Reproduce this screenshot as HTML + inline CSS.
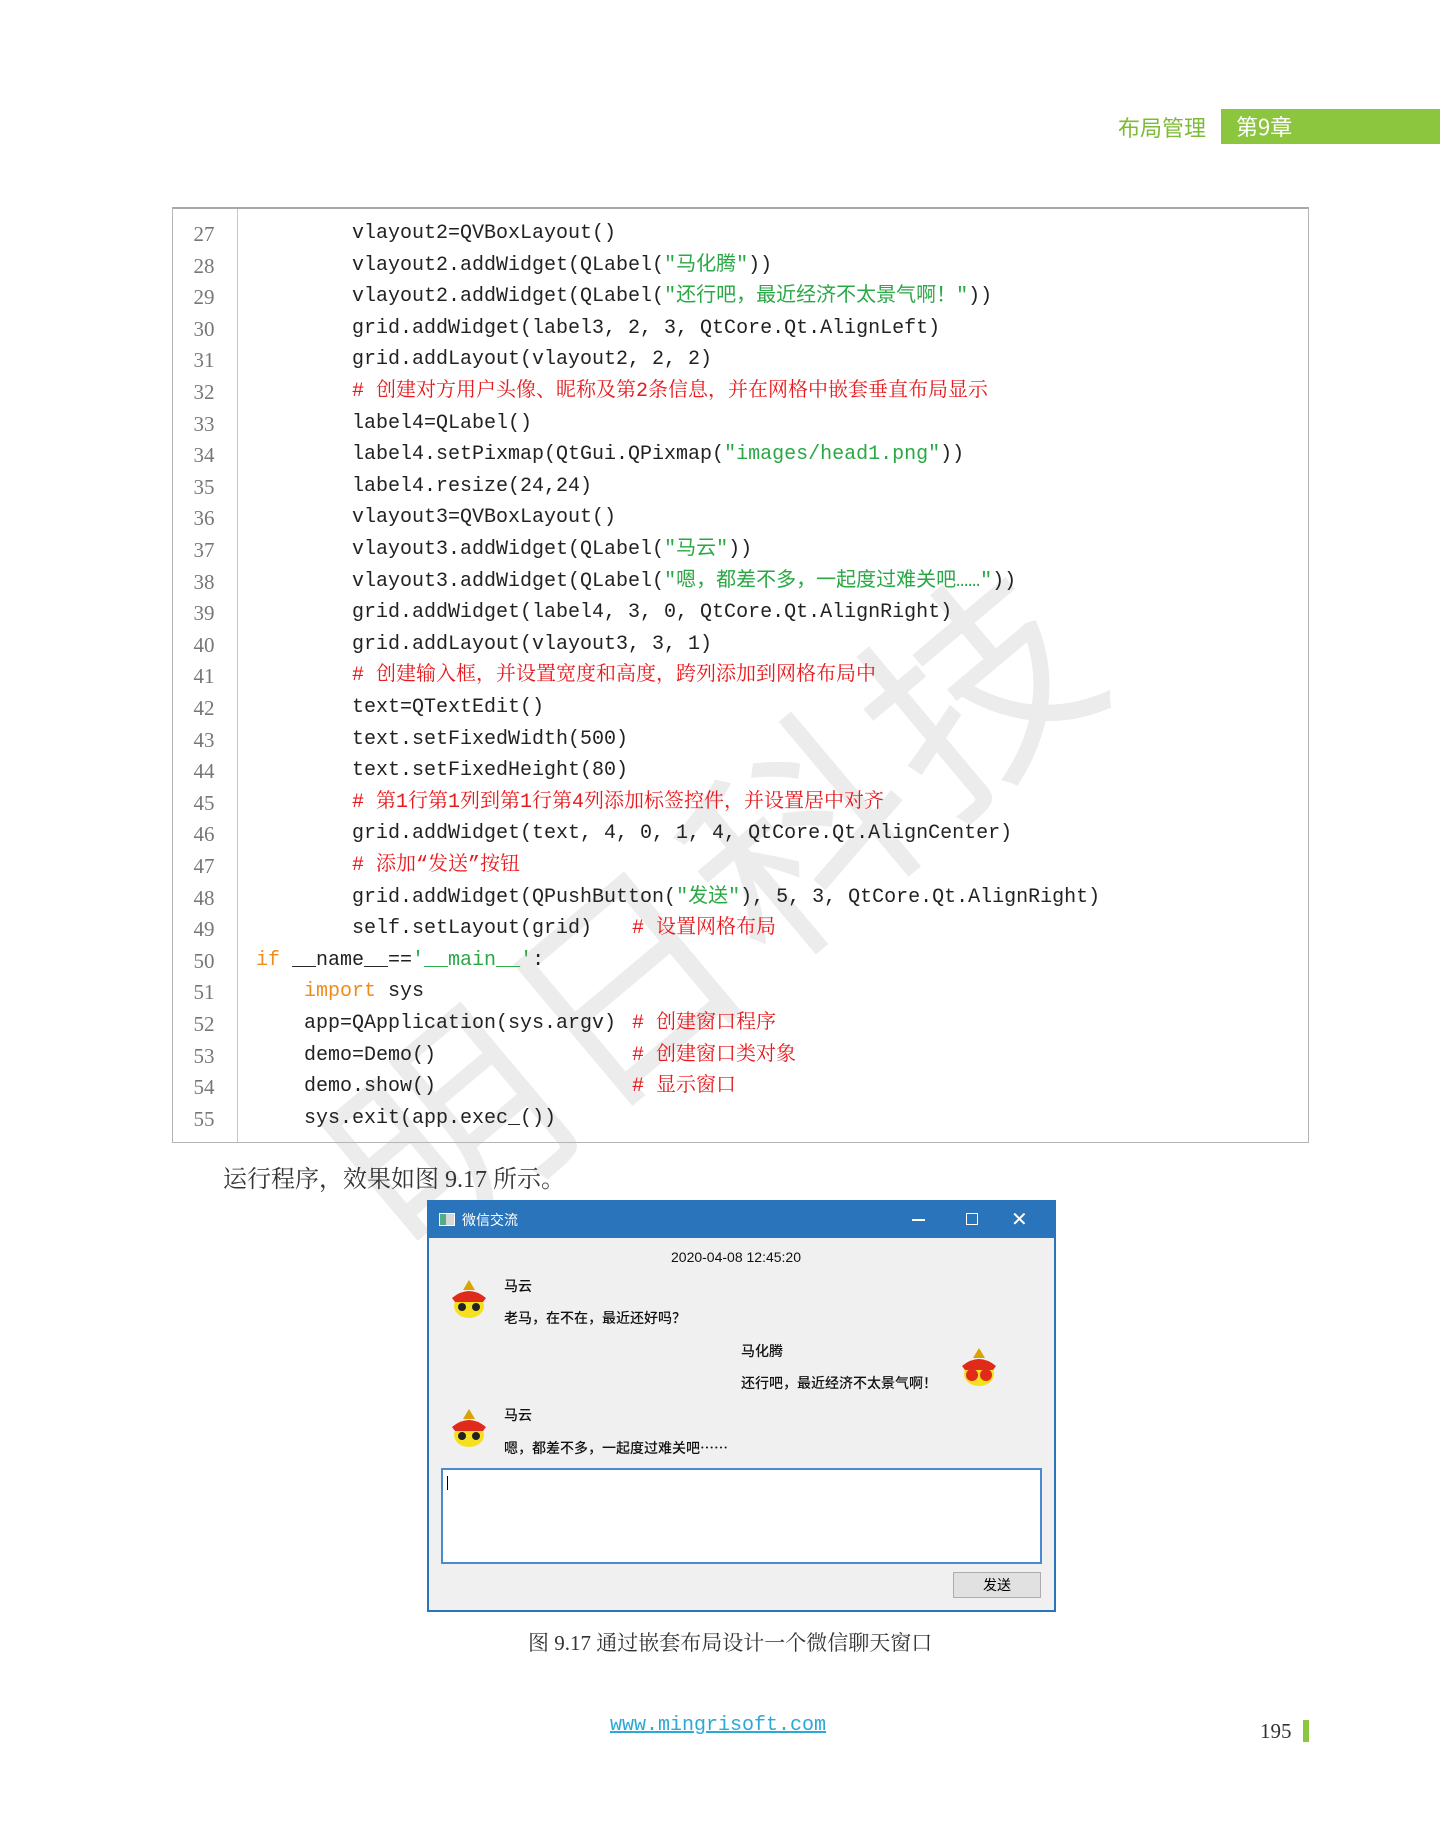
<!DOCTYPE html>
<html><head><meta charset="utf-8">
<style>
*{margin:0;padding:0;box-sizing:border-box}
body{width:1440px;height:1833px;background:#fff;position:relative;overflow:hidden;font-family:"Liberation Sans","Noto Sans CJK SC",sans-serif}
.abs{position:absolute}
.code{position:absolute;left:172px;top:207px;width:1137px;height:936px;border:1px solid #b4b4b4;border-top:2px solid #a8a8a8}
.gut{position:absolute;left:0;top:0;width:65px;height:100%;border-right:1px solid #c8c8c8}
.ln{position:absolute;left:0;width:64px;text-align:center;font-family:"Liberation Serif",serif;font-size:21px;color:#777;line-height:32px}
.cl{position:absolute;white-space:pre;font-family:"Liberation Mono","Noto Sans CJK SC",monospace;font-size:20px;color:#222;line-height:32px}
.r{color:#e8191c;font-family:"Liberation Mono","Noto Serif CJK SC",monospace}
.g{color:#2aa845}
.o{color:#f08c1a}
.wm{position:absolute;left:285px;top:1110px;font-family:"Noto Sans CJK SC",sans-serif;font-size:220px;line-height:220px;color:rgba(200,200,200,0.35);transform:rotate(-40deg);transform-origin:left top;white-space:nowrap;letter-spacing:10px;pointer-events:none}
.win{position:absolute;left:427px;top:1200px;width:629px;height:412px;border:2px solid #2a74bb;background:#f0f0f0}
.tb{height:36px;background:#2a74bb;color:#fff;font-size:14px;position:relative}
.wt{position:absolute;font-size:14px;color:#111;font-family:"Noto Sans CJK SC",sans-serif;font-weight:500}
.av{position:absolute;width:40px;height:42px}
</style></head><body>
<div class="abs" style="left:1118px;top:111px;font-size:22px;color:#7dbb36;font-family:'Noto Sans CJK SC',sans-serif;line-height:32px">布局管理</div>
<div class="abs" style="left:1221px;top:109px;width:219px;height:35px;background:#8cc63f;color:#fff;font-size:22px;font-family:'Noto Sans CJK SC',sans-serif;line-height:34px;padding-left:15px">第9章</div>

<div class="wm">明日科技</div>

<div class="code">
<div class="gut"></div>
</div>

<div style="position:absolute;left:172px;top:218px">
<div class="ln" style="top:0">27</div><div class="ln" style="top:31.6px">28</div><div class="ln" style="top:63.2px">29</div><div class="ln" style="top:94.8px">30</div><div class="ln" style="top:126.4px">31</div><div class="ln" style="top:158px">32</div><div class="ln" style="top:189.6px">33</div><div class="ln" style="top:221.2px">34</div><div class="ln" style="top:252.8px">35</div><div class="ln" style="top:284.4px">36</div><div class="ln" style="top:316px">37</div><div class="ln" style="top:347.6px">38</div><div class="ln" style="top:379.2px">39</div><div class="ln" style="top:410.8px">40</div><div class="ln" style="top:442.4px">41</div><div class="ln" style="top:474px">42</div><div class="ln" style="top:505.6px">43</div><div class="ln" style="top:537.2px">44</div><div class="ln" style="top:568.8px">45</div><div class="ln" style="top:600.4px">46</div><div class="ln" style="top:632px">47</div><div class="ln" style="top:663.6px">48</div><div class="ln" style="top:695.2px">49</div><div class="ln" style="top:726.8px">50</div><div class="ln" style="top:758.4px">51</div><div class="ln" style="top:790px">52</div><div class="ln" style="top:821.6px">53</div><div class="ln" style="top:853.2px">54</div><div class="ln" style="top:884.8px">55</div>

<div class="cl" style="left:180px;top:0">vlayout2=QVBoxLayout()</div>
<div class="cl" style="left:180px;top:31.6px">vlayout2.addWidget(QLabel(<span class="g">"马化腾"</span>))</div>
<div class="cl" style="left:180px;top:63.2px">vlayout2.addWidget(QLabel(<span class="g">"还行吧，最近经济不太景气啊！"</span>))</div>
<div class="cl" style="left:180px;top:94.8px">grid.addWidget(label3, 2, 3, QtCore.Qt.AlignLeft)</div>
<div class="cl" style="left:180px;top:126.4px">grid.addLayout(vlayout2, 2, 2)</div>
<div class="cl r" style="left:180px;top:158px"># 创建对方用户头像、昵称及第2条信息，并在网格中嵌套垂直布局显示</div>
<div class="cl" style="left:180px;top:189.6px">label4=QLabel()</div>
<div class="cl" style="left:180px;top:221.2px">label4.setPixmap(QtGui.QPixmap(<span class="g">"images/head1.png"</span>))</div>
<div class="cl" style="left:180px;top:252.8px">label4.resize(24,24)</div>
<div class="cl" style="left:180px;top:284.4px">vlayout3=QVBoxLayout()</div>
<div class="cl" style="left:180px;top:316px">vlayout3.addWidget(QLabel(<span class="g">"马云"</span>))</div>
<div class="cl" style="left:180px;top:347.6px">vlayout3.addWidget(QLabel(<span class="g">"嗯，都差不多，一起度过难关吧……"</span>))</div>
<div class="cl" style="left:180px;top:379.2px">grid.addWidget(label4, 3, 0, QtCore.Qt.AlignRight)</div>
<div class="cl" style="left:180px;top:410.8px">grid.addLayout(vlayout3, 3, 1)</div>
<div class="cl r" style="left:180px;top:442.4px"># 创建输入框，并设置宽度和高度，跨列添加到网格布局中</div>
<div class="cl" style="left:180px;top:474px">text=QTextEdit()</div>
<div class="cl" style="left:180px;top:505.6px">text.setFixedWidth(500)</div>
<div class="cl" style="left:180px;top:537.2px">text.setFixedHeight(80)</div>
<div class="cl r" style="left:180px;top:568.8px"># 第1行第1列到第1行第4列添加标签控件，并设置居中对齐</div>
<div class="cl" style="left:180px;top:600.4px">grid.addWidget(text, 4, 0, 1, 4, QtCore.Qt.AlignCenter)</div>
<div class="cl r" style="left:180px;top:632px"># 添加“发送”按钮</div>
<div class="cl" style="left:180px;top:663.6px">grid.addWidget(QPushButton(<span class="g">"发送"</span>), 5, 3, QtCore.Qt.AlignRight)</div>
<div class="cl" style="left:180px;top:695.2px">self.setLayout(grid)</div><div class="cl r" style="left:460px;top:695.2px"># 设置网格布局</div>
<div class="cl" style="left:84px;top:726.8px"><span class="o">if</span> __name__==<span class="g">'__main__'</span>:</div>
<div class="cl" style="left:132px;top:758.4px"><span class="o">import</span> sys</div>
<div class="cl" style="left:132px;top:790px">app=QApplication(sys.argv)</div><div class="cl r" style="left:460px;top:790px"># 创建窗口程序</div>
<div class="cl" style="left:132px;top:821.6px">demo=Demo()</div><div class="cl r" style="left:460px;top:821.6px"># 创建窗口类对象</div>
<div class="cl" style="left:132px;top:853.2px">demo.show()</div><div class="cl r" style="left:460px;top:853.2px"># 显示窗口</div>
<div class="cl" style="left:132px;top:884.8px">sys.exit(app.exec_())</div>
</div>

<div class="abs" style="left:223px;top:1159px;font-size:24px;color:#333;font-family:'Liberation Serif','Noto Serif CJK SC',serif">运行程序，效果如图 9.17 所示。</div>

<div class="win">
<div class="tb">
<div class="abs" style="left:10px;top:11px;width:16px;height:13px;background:#d8d8d8;border:1px solid #fff"><div style="width:6px;height:11px;background:#5a8;"></div></div>
<div class="abs" style="left:33px;top:8px;font-family:'Noto Sans CJK SC',sans-serif;font-size:14px">微信交流</div>
<div class="abs" style="left:483px;top:17px;width:13px;height:2px;background:#fff"></div>
<div class="abs" style="left:537px;top:11px;width:12px;height:12px;border:1.5px solid #fff"></div>
<div class="abs" style="left:582px;top:5px;font-size:20px;color:#fff">✕</div>
</div>
<div class="wt" style="left:242px;top:47px;font-family:'Liberation Sans',sans-serif;font-size:14px">2020-04-08 12:45:20</div>
<div class="wt" style="left:75px;top:74px">马云</div>
<div class="wt" style="left:75px;top:106px">老马，在不在，最近还好吗？</div>
<div class="wt" style="left:312px;top:139px">马化腾</div>
<div class="wt" style="left:312px;top:171px">还行吧，最近经济不太景气啊！</div>
<div class="wt" style="left:75px;top:203px">马云</div>
<div class="wt" style="left:75px;top:236px">嗯，都差不多，一起度过难关吧……</div>
<svg class="av" style="left:20px;top:76px" viewBox="0 0 40 42"><path d="M14 12l6-10 6 10z" fill="#d9a400"/><ellipse cx="20" cy="28" rx="15" ry="12" fill="#f5e020"/><path d="M3 20q17-14 34 0l-3 4h-28z" fill="#e02a1a"/><circle cx="13" cy="29" r="4" fill="#222"/><circle cx="27" cy="29" r="4" fill="#222"/></svg>
<svg class="av" style="left:530px;top:144px" viewBox="0 0 40 42"><path d="M14 12l6-10 6 10z" fill="#d9a400"/><ellipse cx="20" cy="28" rx="15" ry="12" fill="#f5e020"/><path d="M3 20q17-14 34 0l-3 4h-28z" fill="#e02a1a"/><circle cx="13" cy="29" r="6" fill="#e02a1a"/><circle cx="27" cy="29" r="6" fill="#e02a1a"/></svg>
<svg class="av" style="left:20px;top:205px" viewBox="0 0 40 42"><path d="M14 12l6-10 6 10z" fill="#d9a400"/><ellipse cx="20" cy="28" rx="15" ry="12" fill="#f5e020"/><path d="M3 20q17-14 34 0l-3 4h-28z" fill="#e02a1a"/><circle cx="13" cy="29" r="4" fill="#222"/><circle cx="27" cy="29" r="4" fill="#222"/></svg>
<div class="abs" style="left:12px;top:266px;width:601px;height:96px;background:#fff;border:2px solid #4a8ad0"><div style="position:absolute;left:4px;top:6px;width:1px;height:14px;background:#000"></div></div>
<div class="abs" style="left:524px;top:370px;width:88px;height:26px;background:#e1e1e1;border:1px solid #adadad;text-align:center;font-size:14px;line-height:24px;font-family:'Noto Sans CJK SC',sans-serif">发送</div>
</div>

<div class="abs" style="left:528px;top:1627px;font-size:21px;color:#333;font-family:'Liberation Serif','Noto Serif CJK SC',serif">图 9.17  通过嵌套布局设计一个微信聊天窗口</div>

<div class="abs" style="left:610px;top:1714px;font-size:20px;color:#2aa8d8;text-decoration:underline;font-family:'Liberation Mono',monospace">www.mingrisoft.com</div>
<div class="abs" style="left:1260px;top:1719px;font-size:21px;color:#333;font-family:'Liberation Serif',serif">195</div>
<div class="abs" style="left:1303px;top:1720px;width:6px;height:22px;background:#8cc63f"></div>
</body></html>
